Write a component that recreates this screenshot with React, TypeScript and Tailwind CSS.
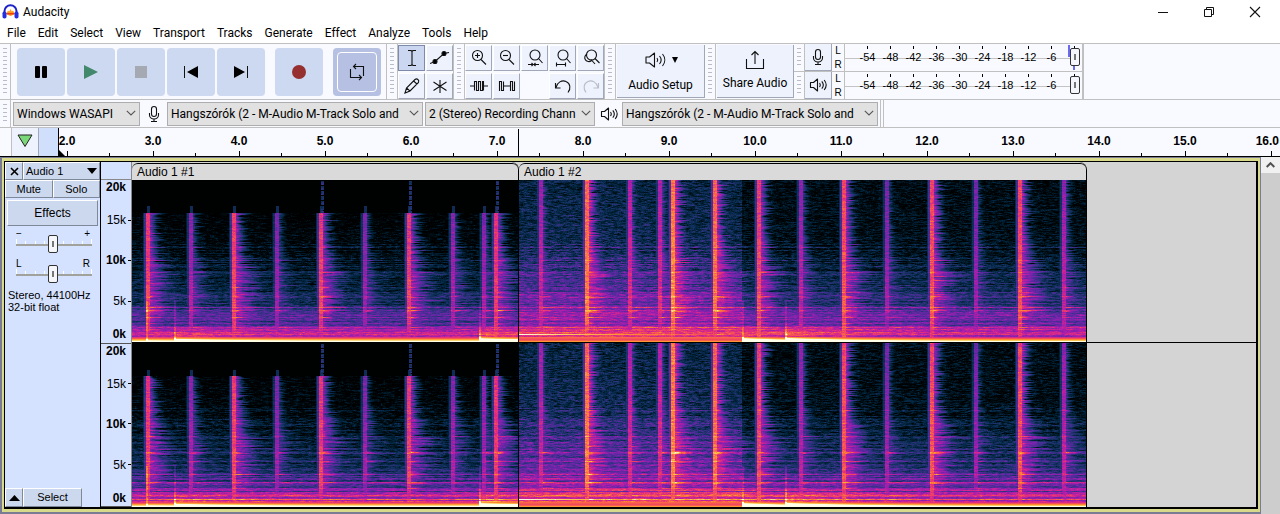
import React, { useEffect, useRef } from 'react'

/* ---------- spectrogram ---------- */

type Point = [number, number]

interface Hit {
  x: number
  s: number
  whisker?: boolean
}

interface Bass {
  x: number
  amp: number
  decay: number
}

interface Clip {
  name: string
  width: number
  seed: number
  cutoff: number
  hits: Hit[]
  bass: Bass[]
  floor: (x: number) => Point[]
}

// [level, r, g, b]
const COLORS = [
  [0, 0, 0, 0],
  [0.1, 0, 8, 12],
  [0.22, 0, 36, 60],
  [0.32, 24, 50, 102],
  [0.42, 68, 46, 146],
  [0.52, 118, 36, 172],
  [0.62, 176, 30, 168],
  [0.71, 224, 44, 128],
  [0.79, 246, 84, 84],
  [0.87, 255, 140, 48],
  [0.94, 252, 202, 84],
  [1, 255, 255, 232],
]

const QUIET: Point[] = [[0, 1], [0.2, 0.92], [0.45, 0.74], [0.9, 0.6], [1.8, 0.5], [3, 0.4], [5, 0.27], [8, 0.19], [12, 0.09], [16, 0.03], [20, 0]]
const HOT: Point[] = [[0, 0.88], [0.2, 0.76], [0.5, 0.82], [1, 0.68], [2, 0.62], [3, 0.53], [5, 0.49], [8, 0.4], [12, 0.27], [20, 0.22]]
const DARK: Point[] = [[0, 1], [0.3, 0.82], [0.6, 0.62], [1.2, 0.57], [2, 0.52], [3.5, 0.42], [5, 0.33], [8, 0.24], [12, 0.13], [20, 0.1]]

const CLIPS: Clip[] = [
  {
    name: 'Audio 1 #1',
    width: 386,
    seed: 3,
    cutoff: 15.9,
    hits: [
      { x: 15, s: 0.75 },
      { x: 58, s: 0.64 },
      { x: 101, s: 0.76 },
      { x: 144, s: 0.61 },
      { x: 188, s: 0.75, whisker: true },
      { x: 232, s: 0.61 },
      { x: 276, s: 0.75, whisker: true },
      { x: 320, s: 0.63 },
      { x: 351, s: 0.62 },
      { x: 363, s: 0.74, whisker: true },
    ],
    bass: [
      { x: 14, amp: 0.04, decay: 40 },
      { x: 42, amp: 0.14, decay: 70 },
      { x: 347, amp: 0.24, decay: 60 },
    ],
    floor: () => QUIET,
  },
  {
    name: 'Audio 1 #2',
    width: 567,
    seed: 11,
    cutoff: 21,
    hits: [
      { x: 21, s: 0.69 },
      { x: 67, s: 0.85 },
      { x: 110, s: 0.72 },
      { x: 140, s: 0.72 },
      { x: 153, s: 0.87 },
      { x: 195, s: 0.84 },
      { x: 239, s: 0.77 },
      { x: 281, s: 0.66 },
      { x: 324, s: 0.79 },
      { x: 367, s: 0.62 },
      { x: 412, s: 0.79 },
      { x: 456, s: 0.61 },
      { x: 500, s: 0.79 },
      { x: 544, s: 0.67 },
    ],
    bass: [
      { x: 223, amp: 0.28, decay: 50 },
      { x: 266, amp: 0.18, decay: 90 },
    ],
    floor: x => (x < 223 ? HOT : DARK),
  },
]

// harmonic lines as [row, boost], one set per channel
const PARTIALS: Point[][] = [
  [[67, 0.09], [80, 0.1], [92, 0.1], [100, 0.06], [107, 0.12], [112, 0.06], [116, 0.16], [117, 0.08], [127, 0.15], [130, 0.2], [131, 0.12], [137, 0.19], [143, 0.08], [147, 0.14], [149, 0.12], [154, 0.1]],
  [[67, 0.11], [80, 0.08], [93, 0.12], [103, 0.06], [109, 0.2], [110, 0.16], [118, 0.14], [131, 0.16], [139, 0.19], [140, 0.12], [145, 0.14], [152, 0.1], [156, 0.1]],
]

const hash = (a: number, b: number, c: number) => {
  let h = (Math.imul(a, 374761393) + Math.imul(b, 668265263) + Math.imul(c, 2147483647)) | 0
  h = Math.imul(h ^ (h >>> 13), 1274126177)
  h = Math.imul(h ^ (h >>> 16), 2246822519)
  return ((h ^ (h >>> 15)) >>> 0) / 4294967296
}

// noise that is smeared along the time axis
const smear = (x: number, y: number, seed: number, step: number) => {
  const cell = Math.floor(x / step)
  const t = x / step - cell
  return hash(cell, y, seed) * (1 - t) + hash(cell + 1, y, seed) * t
}

const interpolate = (points: Point[], k: number) => {
  for (let i = 1; i < points.length; i++) {
    if (k <= points[i][0]) {
      const [k0, v0] = points[i - 1]
      const [k1, v1] = points[i]
      return v0 + ((v1 - v0) * (k - k0)) / (k1 - k0)
    }
  }
  return points[points.length - 1][1]
}

const toColor = (v: number) => {
  const level = Math.max(0, Math.min(1, v))
  for (let i = 1; i < COLORS.length; i++) {
    if (level <= COLORS[i][0]) {
      const a = COLORS[i - 1]
      const b = COLORS[i]
      const t = (level - a[0]) / (b[0] - a[0])
      return [a[1] + (b[1] - a[1]) * t, a[2] + (b[2] - a[2]) * t, a[3] + (b[3] - a[3]) * t]
    }
  }
  return [255, 255, 232]
}

const levelAt = (clip: Clip, channel: number, x: number, y: number, height: number) => {
  const k = ((height - 1 - y) / height) * 20
  const seed = clip.seed + channel * 17
  const grain = hash(x, y, seed) * 0.3 + smear(x, y, seed + 1, 3) * 0.7
  const slow = smear(x, y, seed + 2, 14)
  const row = hash(y, 5, channel)

  if (k > clip.cutoff) {
    const onWhisker = clip.hits.some(h => h.whisker && x - h.x >= 1 && x - h.x <= 3)
    if (onWhisker && y % 5 !== 0) return 0.24 + grain * 0.18
    // attack peaks reach slightly over the cutoff
    const overCutoff = k < clip.cutoff + 0.8 && clip.hits.some(h => Math.abs(x - h.x - 1) <= 1)
    return overCutoff ? 0.28 : 0.01
  }

  let v = interpolate(clip.floor(x), k)
  if (k > 0.5) {
    const roughness = 0.16 + Math.min(k, 10) * 0.014
    v += (grain - 0.5) * roughness + (slow - 0.5) * 0.08
    if (k < 12) v += (row - 0.5) * (k < 4 ? 0.2 : 0.12)
  }

  let since = 999
  clip.hits.forEach((hit, i) => {
    const dx = x - hit.x
    if (dx < -4) return
    const reach = 0.3 + hash(y, i + 9, seed) * 0.7 + row * 0.9
    let peak = hit.s - (hit.s < 0.74 ? 0.006 : 0.002) * k - (k < 4 ? (4 - k) * 0.03 : 0)
    peak += (grain - 0.5) * 0.16
    if (dx < -1) {
      v = Math.max(v, peak * (dx < -3 ? 0.35 : 0.55))
      return
    }
    if (dx <= 2) {
      v = Math.max(v, peak)
      since = Math.max(0, dx)
      return
    }
    since = Math.min(since, dx)
    const rate = k > 13 ? 0.05 : k > 8 ? 0.014 + (k - 8) * 0.0065 : 0.01 + k * 0.0008
    const drop = 0.05 + 0.18 * slow
    v = Math.max(v, peak - drop - ((dx - 2) * rate) / reach)
  })

  PARTIALS[channel].forEach(([line, boost]) => {
    if (y === line) v += boost * (since < 3 ? 0.4 : 0.55 + Math.exp(-since / 20) * 0.8)
  })

  // the held note at the start of the second clip
  if (clip.seed === 11 && x < 223 && y === (channel ? 156 : 154)) {
    v = Math.max(v, 1 - x * 0.0012)
  }

  clip.bass.forEach(b => {
    const dx = x - b.x
    if (dx >= 0 && k < 5) {
      v += b.amp * Math.pow(1 - k / 5, 3) * Math.exp(-dx / b.decay)
      if (dx < 2) v += 0.1
    }
  })
  return v
}

const Spectrogram: React.FC<{ clip: Clip; channel: number; height: number }> = ({ clip, channel, height }) => {
  const ref = useRef<HTMLCanvasElement>(null)

  useEffect(() => {
    const ctx = ref.current?.getContext('2d')
    if (!ctx) return
    const image = ctx.createImageData(clip.width, height)
    for (let y = 0; y < height; y++) {
      for (let x = 0; x < clip.width; x++) {
        const [r, g, b] = toColor(levelAt(clip, channel, x, y, height))
        const i = (y * clip.width + x) * 4
        image.data[i] = r
        image.data[i + 1] = g
        image.data[i + 2] = b
        image.data[i + 3] = 255
      }
    }
    ctx.putImageData(image, 0, 0)
  }, [clip, channel, height])

  return <canvas ref={ref} width={clip.width} height={height} className="block" />
}

/* ---------- icons ---------- */

const Svg: React.FC<{ size?: number; children: React.ReactNode }> = ({ size = 20, children }) => (
  <svg width={size} height={size} viewBox={`0 0 ${size} ${size}`} fill="none" stroke="#111" strokeWidth="1.1" aria-hidden="true" className="shrink-0">
    {children}
  </svg>
)

const Lens = () => (
  <>
    <circle cx="8.5" cy="7.5" r="5" />
    <path d="M12 11.500l5 5" />
  </>
)

const MicIcon = () => (
  <Svg>
    <rect x="7.5" y="2.5" width="5" height="10" rx="2.5" />
    <path d="M5.500 9v2a4.500 4 0 0 0 9 0V9M10 15v2.500M7 17.500h6" />
  </Svg>
)

const SpeakerIcon = () => (
  <Svg>
    <path d="M2.500 7.500h3l4-3.500v12l-4-3.500h-3z" strokeLinejoin="round" />
    <path d="M11.500 8c.9 1.200.9 2.800 0 4M13.800 6.300c1.800 2.200 1.800 5.200 0 7.400M16.200 5c2.400 3 2.400 7 0 10" />
  </Svg>
)

const Chevron = () => (
  <svg width="10" height="6" viewBox="0 0 10 6" fill="none" stroke="#555" strokeWidth="1.1" aria-hidden="true" className="pointer-events-none absolute right-1 top-2">
    <path d="M.8.8L5 5 9.200.8" />
  </svg>
)

const Logo = () => (
  <svg width="17" height="16" viewBox="0 0 17 16" aria-hidden="true">
    <path d="M2.500 9V7a6 5.700 0 0 1 12 0v2" fill="none" stroke="#1c22c8" strokeWidth="2" />
    <path d="M4.500 9.500l1.500-3 1.200 1L8.500 5l1.300 2.500 1.200-1 1.700 3-1.700 1.500-2.500 1-2.500-1z" fill="#ff9a1a" />
    <path d="M4.500 9h8v1.500h-8z" fill="#f03a12" />
    <rect x="0.500" y="7.500" width="4" height="7" rx="1.800" fill="#2430e0" />
    <rect x="12.500" y="7.500" width="4" height="7" rx="1.800" fill="#2430e0" />
  </svg>
)

/* ---------- toolbar pieces ---------- */

const Grip: React.FC = () => (
  <div className="flex w-[11px] shrink-0 items-center justify-center self-stretch border-r border-[#c0c0c0] py-1">
    <div className="h-full w-1 bg-[repeating-linear-gradient(#b8bcc8_0px,#b8bcc8_1px,transparent_1px,transparent_4px)]" />
  </div>
)

const TransportButton: React.FC<{ label: string; className?: string; children: React.ReactNode }> = ({ label, className = 'bg-[#cdd9f0]', children }) => (
  <button aria-label={label} className={`flex size-12 items-center justify-center rounded ${className}`}>
    {children}
  </button>
)

const ToolButton: React.FC<{ label: string; active?: boolean; children: React.ReactNode }> = ({ label, active, children }) => (
  <button
    aria-label={label}
    className={`flex h-[26px] w-[27px] items-center justify-center border ${
      active ? 'border-[#7f8aa8] bg-[#cbd7f0]' : 'border-t-white border-l-white border-r-[#a0a8b8] border-b-[#a0a8b8] bg-[#edf2fd]'
    }`}
  >
    {children}
  </button>
)

const Dropdown: React.FC<{ label: string; value: string; width: string }> = ({ label, value, width }) => (
  <div className={`relative shrink-0 ${width}`}>
    <select aria-label={label} className="block h-6 w-full appearance-none text-clip border border-[#adadad] bg-[#e1e1e1] pl-[3px] pr-4 text-[12px]">
      <option>{value}</option>
    </select>
    <Chevron />
  </div>
)

const THUMB =
  'appearance-none bg-transparent [&::-webkit-slider-thumb]:h-[18px] [&::-webkit-slider-thumb]:w-[10px] [&::-webkit-slider-thumb]:appearance-none [&::-webkit-slider-thumb]:rounded-[2px] [&::-webkit-slider-thumb]:border [&::-webkit-slider-thumb]:border-[#333] [&::-webkit-slider-thumb]:bg-[#f4f6fc] [&::-webkit-slider-thumb]:bg-[linear-gradient(#777,#777)] [&::-webkit-slider-thumb]:bg-[length:2px_6px] [&::-webkit-slider-thumb]:bg-center [&::-webkit-slider-thumb]:bg-no-repeat'

const DB_MARKS = ['-54', '-48', '-42', '-36', '-30', '-24', '-18', '-12', '-6', '0']

const Meter: React.FC<{ label: string; icon: React.ReactNode; clipping?: boolean }> = ({ label, icon, clipping }) => (
  <div className="flex h-7 border-b border-[#c0c0c0]">
    <Grip />
    <button aria-label={label} className="flex w-[27px] items-center justify-center border-r border-b border-[#a0a8b8] bg-[#edf2fd]">
      {icon}
    </button>
    <div className="flex w-3 flex-col items-center justify-between text-[10px] leading-[13px]">
      <span>L</span>
      <span>R</span>
    </div>
    <div className="relative flex w-[236px] border-l border-[#c0c0c0] pl-[11px] text-[11px]">
      <div className="absolute inset-x-0 top-[14px] h-px bg-[#c4c4c4]" />
      {DB_MARKS.map(db => (
        <div key={db} className="relative flex w-[23px] shrink-0 flex-col items-center pt-[2px]">
          <div className="h-[3px] w-px bg-black" />
          <span className="mt-[2px] leading-[13px]">{db}</span>
        </div>
      ))}
      {clipping && <div className="absolute top-px left-[223px] h-3 w-[2px] bg-[#6a6af0]" />}
      {clipping && <div className="absolute bottom-px left-[228px] h-1 w-[2px] bg-[#6a6af0]" />}
      <input type="range" aria-label={`${label} level`} defaultValue={100} className={`absolute top-[3px] right-0 h-5 w-full ${THUMB}`} />
    </div>
    <div className="w-[3px] border-r border-[#c0c0c0]" />
  </div>
)

/* ---------- track panel ---------- */

const PanSlider: React.FC<{ label: string; left: string; right: string }> = ({ label, left, right }) => (
  <div className="h-[30px] pr-2 pl-[11px]">
    <div className="flex justify-between pr-[2px] text-[10px] leading-[10px]">
      <span>{left}</span>
      <span>{right}</span>
    </div>
    <div className="relative mt-[-1px] h-[8px] border-b-2 border-[#a2a29c]">
      <div className="flex h-full items-end justify-between">
        {Array.from({ length: 9 }, (_, i) => (
          <div key={i} className={`w-px bg-white ${i % 4 === 0 ? 'h-[5px]' : 'h-[3px]'}`} />
        ))}
      </div>
      <input type="range" aria-label={label} defaultValue={48} className={`absolute top-[-4px] left-0 h-5 w-full ${THUMB}`} />
    </div>
  </div>
)

const BEVEL = 'border border-t-white border-l-white border-r-[#7f8898] border-b-[#7f8898] bg-[#ccd8ee]'

const TrackPanel = () => (
  <div className="flex w-[96px] shrink-0 flex-col border-r border-black bg-[#d5e2ff] text-[11px]">
    <div className="flex h-[18px]">
      <button aria-label="Close track" className={`flex w-[18px] items-center justify-center ${BEVEL}`}>
        <svg width="9" height="9" viewBox="0 0 9 9" stroke="#000" strokeWidth="1.6" aria-hidden="true">
          <path d="M1 1l7 7M8 1L1 8" />
        </svg>
      </button>
      <button className={`flex flex-1 items-center justify-between pl-[2px] pr-[2px] ${BEVEL}`}>
        Audio 1
        <svg width="10" height="6" viewBox="0 0 10 6" aria-hidden="true">
          <path d="M0 0h10L5 6z" />
        </svg>
      </button>
    </div>
    <div className="flex h-[18px]">
      <button className={`flex-1 ${BEVEL}`}>Mute</button>
      <button className={`flex-1 ${BEVEL}`}>Solo</button>
    </div>
    <button className={`mx-[2px] mt-[2px] h-[26px] shrink-0 text-[12px] ${BEVEL}`}>Effects</button>
    <div className="mt-[3px]">
      <PanSlider label="Gain" left="−" right="+" />
      <PanSlider label="Pan" left="L" right="R" />
    </div>
    <p className="pl-[3px] leading-3 whitespace-nowrap">
      Stereo, 44100Hz
      <br />
      32-bit float
    </p>
    <div className="mt-auto flex h-[19px]">
      <button aria-label="Collapse track" className={`flex w-[18px] items-center justify-center ${BEVEL}`}>
        <svg width="11" height="6" viewBox="0 0 11 6" aria-hidden="true">
          <path d="M0 6h11L5.500 0z" />
        </svg>
      </button>
      <button className={`w-[59px] ${BEVEL}`}>Select</button>
    </div>
  </div>
)

const FREQUENCIES = [
  { label: '20k', style: 'font-bold', tick: false },
  { label: '15k', style: 'mt-[19px]', tick: true },
  { label: '10k', style: 'mt-[26px] font-bold', tick: true },
  { label: '5k', style: 'mt-[27px]', tick: true },
  { label: '0k', style: 'mt-[19px] font-bold', tick: false },
]

const FrequencyScale: React.FC = () => (
  <div className="flex flex-1 flex-col border-b border-[#555] text-[12px] leading-[14px]">
    {FREQUENCIES.map(f => (
      <div key={f.label} className={`flex h-[14px] items-center justify-end gap-[2px] ${f.style}`}>
        {f.label}
        <div className={`h-px w-[3px] ${f.tick ? 'bg-black' : ''}`} />
      </div>
    ))}
  </div>
)

const MENU = ['File', 'Edit', 'Select', 'View', 'Transport', 'Tracks', 'Generate', 'Effect', 'Analyze', 'Tools', 'Help']
const SECONDS = Array.from({ length: 15 }, (_, i) => `${i + 2}.0`)

const App: React.FC = () => {
  return (
    <div className="flex min-h-screen flex-col overflow-hidden bg-[#f8faff] font-[Roboto,'Open_Sans',sans-serif] text-[12px] text-black">
      <header className="flex h-[23px] items-center bg-white pr-[2px] pl-[2px]">
        <Logo />
        <h1 className="ml-1 flex-1">Audacity</h1>
        <button aria-label="Minimize" className="flex w-[46px] justify-center">
          <Svg size={12}><path d="M1 6.500h10" strokeWidth="1" /></Svg>
        </button>
        <button aria-label="Restore" className="flex w-[46px] justify-center">
          <Svg size={12}><path d="M1.500 3.500h7v7h-7zM3.500 3.500v-2h7v7h-2" strokeWidth="1" /></Svg>
        </button>
        <button aria-label="Close" className="flex w-[46px] justify-center">
          <Svg size={12}><path d="M1 1l10 10M11 1L1 11" /></Svg>
        </button>
      </header>

      <nav className="flex h-5 items-center bg-white pl-px">
        {MENU.map(item => (
          <button key={item} className="px-[6px]">{item}</button>
        ))}
      </nav>

      {/* toolbar row 1 */}
      <div className="flex h-[57px] border-y border-[#c0c0c0]">
        <Grip />
        <div className="flex items-center gap-[2px] border-r border-[#c0c0c0] pr-[5px] pl-[6px]">
          <TransportButton label="Pause">
            <Svg><rect x="4" y="4" width="5" height="12" rx="1" fill="#000" stroke="none" /><rect x="11" y="4" width="5" height="12" rx="1" fill="#000" stroke="none" /></Svg>
          </TransportButton>
          <TransportButton label="Play">
            <Svg><path d="M3 3l14 7-14 7z" fill="#42886c" stroke="none" /></Svg>
          </TransportButton>
          <TransportButton label="Stop">
            <Svg><path d="M4 4h12v12H4z" fill="#a5a9b2" stroke="none" /></Svg>
          </TransportButton>
          <TransportButton label="Skip to start">
            <Svg><path d="M17 4v12L6 10z" fill="#000" stroke="none" /><path d="M3.500 4v12" strokeWidth="1" /></Svg>
          </TransportButton>
          <TransportButton label="Skip to end">
            <Svg><path d="M3 4v12l11-6z" fill="#000" stroke="none" /><path d="M16.500 4v12" strokeWidth="1" /></Svg>
          </TransportButton>
          <TransportButton label="Record" className="ml-2 bg-[#cdd9f0]">
            <Svg><circle cx="10" cy="10" r="7" fill="#963030" stroke="none" /></Svg>
          </TransportButton>
          <TransportButton label="Loop" className="ml-2 bg-[#b6c0e2]">
            <span className="flex size-10 items-center justify-center rounded border border-white">
              <Svg>
                <path d="M6.500 4.500h10v9.500M14.500 15.500h-11V7" />
                <path d="M9 2L6.500 4.500 9 7M12 13l2.500 2.500L12 18" />
              </Svg>
            </span>
          </TransportButton>
        </div>

        <Grip />
        <div className="grid grid-cols-2 content-center gap-x-px gap-y-[2px] border-r border-[#c0c0c0]">
          <ToolButton label="Selection tool" active>
            <Svg><path d="M6 2.500h3l1 1 1-1h3M10 3.500v13M6 17.500h3l1-1 1 1h3" /></Svg>
          </ToolButton>
          <ToolButton label="Envelope tool">
            <Svg><path d="M0 15.500l5-2 9-8 5-1" /><circle cx="5" cy="13.500" r="2" fill="#000" /><circle cx="14" cy="5.500" r="2" fill="#000" /></Svg>
          </ToolButton>
          <ToolButton label="Draw tool">
            <Svg><path d="M3 17l1.500-5L13 3.500c2-1.500 4.500.5 3.500 3L8 15zM4.500 12L8 15M11.500 5l3.500 3" /></Svg>
          </ToolButton>
          <ToolButton label="Multi-tool">
            <Svg><path d="M10 4v13M3.500 6l13 8.500M16.500 6l-13 8.500" /></Svg>
          </ToolButton>
        </div>

        <Grip />
        <div className="grid grid-cols-5 content-center gap-x-px gap-y-[2px] border-r border-[#c0c0c0]">
          <ToolButton label="Zoom in"><Svg><Lens /><path d="M8.500 5v5M6 7.500h5" /></Svg></ToolButton>
          <ToolButton label="Zoom out"><Svg><Lens /><path d="M6 7.500h5" /></Svg></ToolButton>
          <ToolButton label="Fit selection to width">
            <Svg><circle cx="10" cy="7" r="5" /><path d="M13.500 10.500l4 4.500M3 16.500h5M9 16.500h5M6.500 15L8 16.500 6.500 18M10.500 15L9 16.500l1.500 1.500" /></Svg>
          </ToolButton>
          <ToolButton label="Fit project to width">
            <Svg><circle cx="10" cy="7" r="5" /><path d="M13.500 10.500l4 4.500M3.500 16.500h9M3.500 14.500v4M12.500 14.500v4" /></Svg>
          </ToolButton>
          <ToolButton label="Zoom toggle">
            <Svg><circle cx="10.500" cy="7" r="5" /><path d="M14 10.500l4.500 4.500M6 6a4 4 0 1 0 4.500 6.500M10 11.500l4 4.500" /></Svg>
          </ToolButton>
          <ToolButton label="Trim audio outside selection">
            <Svg><path d="M1 10h4.500M14.500 10H19M5.500 14.500v-9h2v9h2v-9h2v9h2v-9h1v9" /></Svg>
          </ToolButton>
          <ToolButton label="Silence audio selection">
            <Svg><path d="M2.500 15V5.500h2v9h2v-9M6.500 10h7M13.500 15V5.500h2v9h2v-9" /></Svg>
          </ToolButton>
          <div />
          <ToolButton label="Undo">
            <Svg><path d="M2.500 7v5h5M3 11.500c1-5 6-8 10-6 4.500 2 5 7 2 11" /></Svg>
          </ToolButton>
          <ToolButton label="Redo">
            <Svg><path stroke="#b8bcc8" d="M17.500 7v5h-5M17 11.500c-1-5-6-8-10-6-4.500 2-5 7-2 11" /></Svg>
          </ToolButton>
        </div>

        <Grip />
        <button className="my-px ml-px flex w-[88px] flex-col items-center justify-center gap-1 border-r border-b border-[#a0a8b8] bg-[#edf2fd]">
          <span className="flex items-center gap-1">
            <Svg size={24}>
              <path d="M2 9h3.500l5-4v14l-5-4H2z" strokeLinejoin="round" />
              <path d="M13 10c.9 1.200.9 2.800 0 4M15.500 8c2 2.400 2 5.600 0 8M18.500 6c3 3.600 3 8.400 0 12" />
            </Svg>
            <svg width="6" height="6" viewBox="0 0 6 6" aria-hidden="true"><path d="M0 0h6L3 6z" /></svg>
          </span>
          Audio Setup
        </button>

        <Grip />
        <button className="my-px ml-px flex w-[77px] flex-col items-center justify-center gap-1 border-r border-b border-[#a0a8b8] bg-[#edf2fd] whitespace-nowrap">
          <Svg><path d="M1.500 9v9.500h17V9M10 14V1.500M6.500 5L10 1.500 13.500 5" /></Svg>
          Share Audio
        </button>

        <div className="border-r border-[#c0c0c0] font-['Liberation_Sans',Arial,sans-serif]">
          <Meter label="Record meter" icon={<MicIcon />} clipping />
          <Meter label="Playback meter" icon={<SpeakerIcon />} />
        </div>
      </div>

      {/* toolbar row 2 */}
      <div className="flex h-7 items-center border-b border-[#c0c0c0]">
        <Grip />
        <div className="flex items-center self-stretch border-r border-[#c0c0c0] pr-[2px] pl-[2px]">
          <Dropdown label="Audio host" value="Windows WASAPI" width="w-[127px]" />
          <div className="flex w-[27px] justify-center"><MicIcon /></div>
          <Dropdown label="Recording device" value="Hangszórók (2 - M-Audio M-Track Solo and" width="w-[256px]" />
          <div className="w-[2px]" />
          <Dropdown label="Recording channels" value="2 (Stereo) Recording Chann" width="w-[170px]" />
          <div className="flex w-[27px] justify-center"><SpeakerIcon /></div>
          <Dropdown label="Playback device" value="Hangszórók (2 - M-Audio M-Track Solo and" width="w-[256px]" />
        </div>
        <div className="w-[3px] self-stretch border-r border-[#c0c0c0]" />
      </div>

      {/* timeline */}
      <div className="relative flex h-[29px] overflow-hidden border-b border-black font-['Liberation_Sans',Arial,sans-serif]">
        <div className="w-3 shrink-0 border-r border-[#c0c0c0]" />
        <button aria-label="Unpin play head" className="flex w-[27px] shrink-0 justify-center border-r border-[#a0a8b8] bg-[#edf2fd] pt-[6px]">
          <svg width="16" height="14" viewBox="0 0 16 14" aria-hidden="true">
            <path d="M1 1h14L8 12.500z" fill="#7bd878" stroke="#222" />
          </svg>
        </button>
        <div className="w-5 shrink-0 border-r border-black bg-[#d0e0fc]" />
        <div className="flex flex-1 overflow-hidden">
          {SECONDS.map(s => (
            <div key={s} className="flex w-[86px] shrink-0 items-end last:w-4">
              <div className="flex h-full w-4 flex-col items-center justify-between pt-[6px]">
                <span className={`flex text-[12px] leading-[15px] font-bold ${s === '16.0' ? 'self-end' : ''}`}>{s}</span>
                <div className="h-[5px] w-px bg-black" />
              </div>
              <div className="ml-[34px] h-[3px] w-px bg-black" />
            </div>
          ))}
        </div>
        <svg width="7" height="7" viewBox="0 0 7 7" aria-hidden="true" className="absolute bottom-0 left-[58px]">
          <path d="M0 0l7 7H0z" />
        </svg>
        <div className="absolute top-px bottom-0 left-[518px] w-px bg-black" />
      </div>

      {/* tracks */}
      <main className="flex flex-1 font-['Liberation_Sans',Arial,sans-serif]">
        <div className="flex-1 border-2 border-t border-r border-[#7a7c94] bg-[#d9d98c]">
          <div className="m-[2px] mt-[3px] flex h-[348px] border border-r-2 border-b-2 border-black bg-[#d4d4d4]">
            <TrackPanel />
            <div className="flex w-[31px] shrink-0 flex-col border-r border-[#888] bg-[#d5e2ff]">
              <div className="h-[18px] border-b border-[#888]" />
              <FrequencyScale />
              <FrequencyScale />
            </div>
            <div className="flex min-w-0 flex-1">
              {CLIPS.map(clip => (
                <section key={clip.name} className="shrink-0 rounded-tr-lg border-r border-black pt-px">
                  <h2 className="h-[17px] rounded-t-md border-t border-black bg-[#dadada] pl-[5px] text-[12px] leading-4">{clip.name}</h2>
                  <Spectrogram clip={clip} channel={0} height={162} />
                  <div className="h-px bg-black" />
                  <Spectrogram clip={clip} channel={1} height={164} />
                </section>
              ))}
              <div className="flex-1">
                <div className="h-[181px] border-b border-black" />
              </div>
            </div>
          </div>
        </div>
        <div className="w-[19px] shrink-0 bg-[#cdcdcd]">
          <button aria-label="Scroll up" className="flex h-4 w-full items-center justify-center bg-[#f0f0f0]">
            <svg width="9" height="6" viewBox="0 0 9 6" fill="none" stroke="#505050" strokeWidth="2" aria-hidden="true">
              <path d="M.7 5L4.500 1.200 8.300 5" />
            </svg>
          </button>
        </div>
      </main>
    </div>
  )
}

export default App
